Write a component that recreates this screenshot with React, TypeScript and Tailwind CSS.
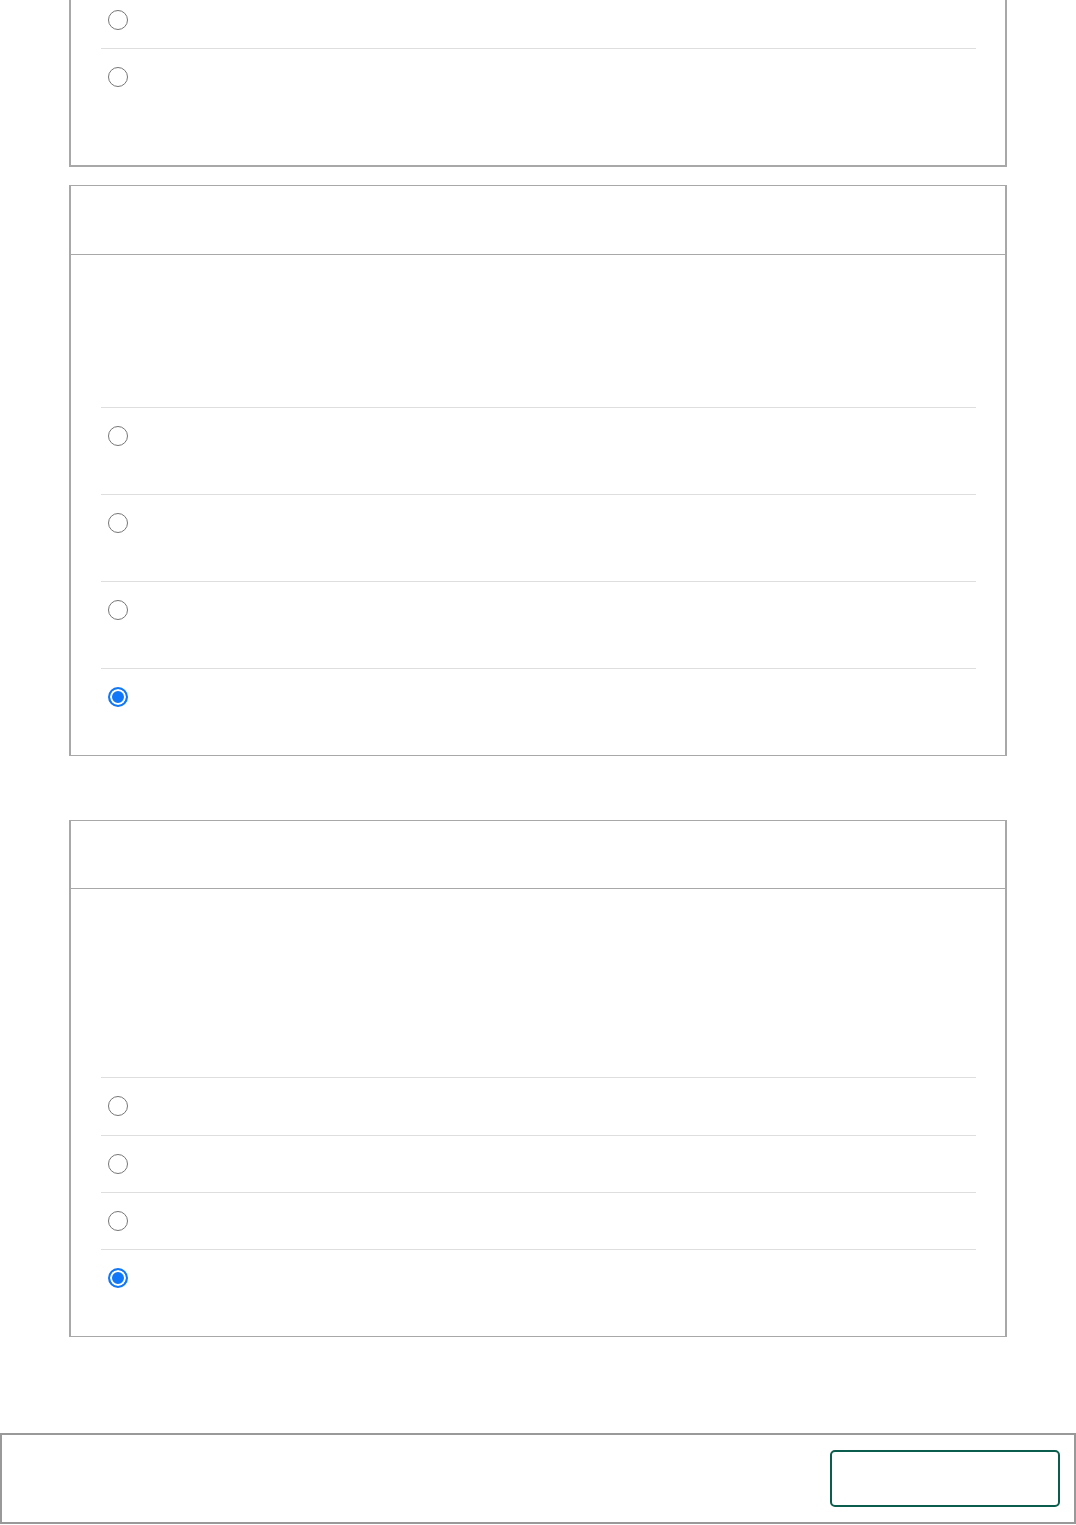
import React from "react";

function Radio({ checked = false, name }: { checked?: boolean; name: string }) {
  if (checked) {
    return (
      <input
        type="radio"
        name={name}
        defaultChecked
        className="block h-5 w-5 m-0 appearance-none rounded-full border-2 border-[#1078f8] bg-[#1078f8] shadow-[inset_0_0_0_2px_white]"
      />
    );
  }
  return <input type="radio" name={name} className="block h-5 w-5 m-0" />;
}

function Row({ h, first = false, checked = false, name }: { h: string; first?: boolean; checked?: boolean; name: string }) {
  return (
    <div className={`${first ? "" : "border-t border-[#dedede]"} ${h} pl-[7px] pt-[18px]`}>
      <Radio name={name} checked={checked} />
    </div>
  );
}

export default function App() {
  return (
    <div className="min-h-[1525px] bg-white font-['Liberation_Sans',sans-serif]">
      <div className="ml-[69px] w-[938px]">
        {/* Card 1 (top cut off) */}
        <div className="border-x-2 border-b-2 border-[#a8a8a8] pl-[30px] pr-[29px] pb-[29px]">
          <div className="h-[48px] pl-[7px] pt-[10px]">
            <Radio name="q1" />
          </div>
          <div className="border-t border-[#dedede] h-[88px] pl-[7px] pt-[18px]">
            <Radio name="q1" />
          </div>
        </div>

        {/* Card 2 */}
        <div className="mt-[18px] border border-[#a8a8a8] border-x-2">
          <div className="h-[69px] border-b border-[#a8a8a8]" />
          <div className="pl-[30px] pr-[29px]">
            <div className="h-[152px]" />
            <Row h="h-[87px]" name="q2" />
            <Row h="h-[87px]" name="q2" />
            <Row h="h-[87px]" name="q2" />
            <Row h="h-[87px]" name="q2" checked />
          </div>
        </div>

        {/* Card 3 */}
        <div className="mt-[64px] border border-[#a8a8a8] border-x-2">
          <div className="h-[68px] border-b border-[#a8a8a8]" />
          <div className="pl-[30px] pr-[29px] pb-[30px]">
            <div className="h-[188px]" />
            <Row h="h-[58px]" name="q3" />
            <Row h="h-[57px]" name="q3" />
            <Row h="h-[57px]" name="q3" />
            <Row h="h-[57px]" name="q3" checked />
          </div>
        </div>
      </div>

      {/* Footer */}
      <div className="mt-[96px] w-[1076px] border-2 border-[#999999] flex justify-end pt-[15px] pb-[15px] pr-[14px]">
        <button className="w-[230px] h-[57px] rounded-[5px] border-2 border-[#0b5e4d] bg-white" />
      </div>
    </div>
  );
}
